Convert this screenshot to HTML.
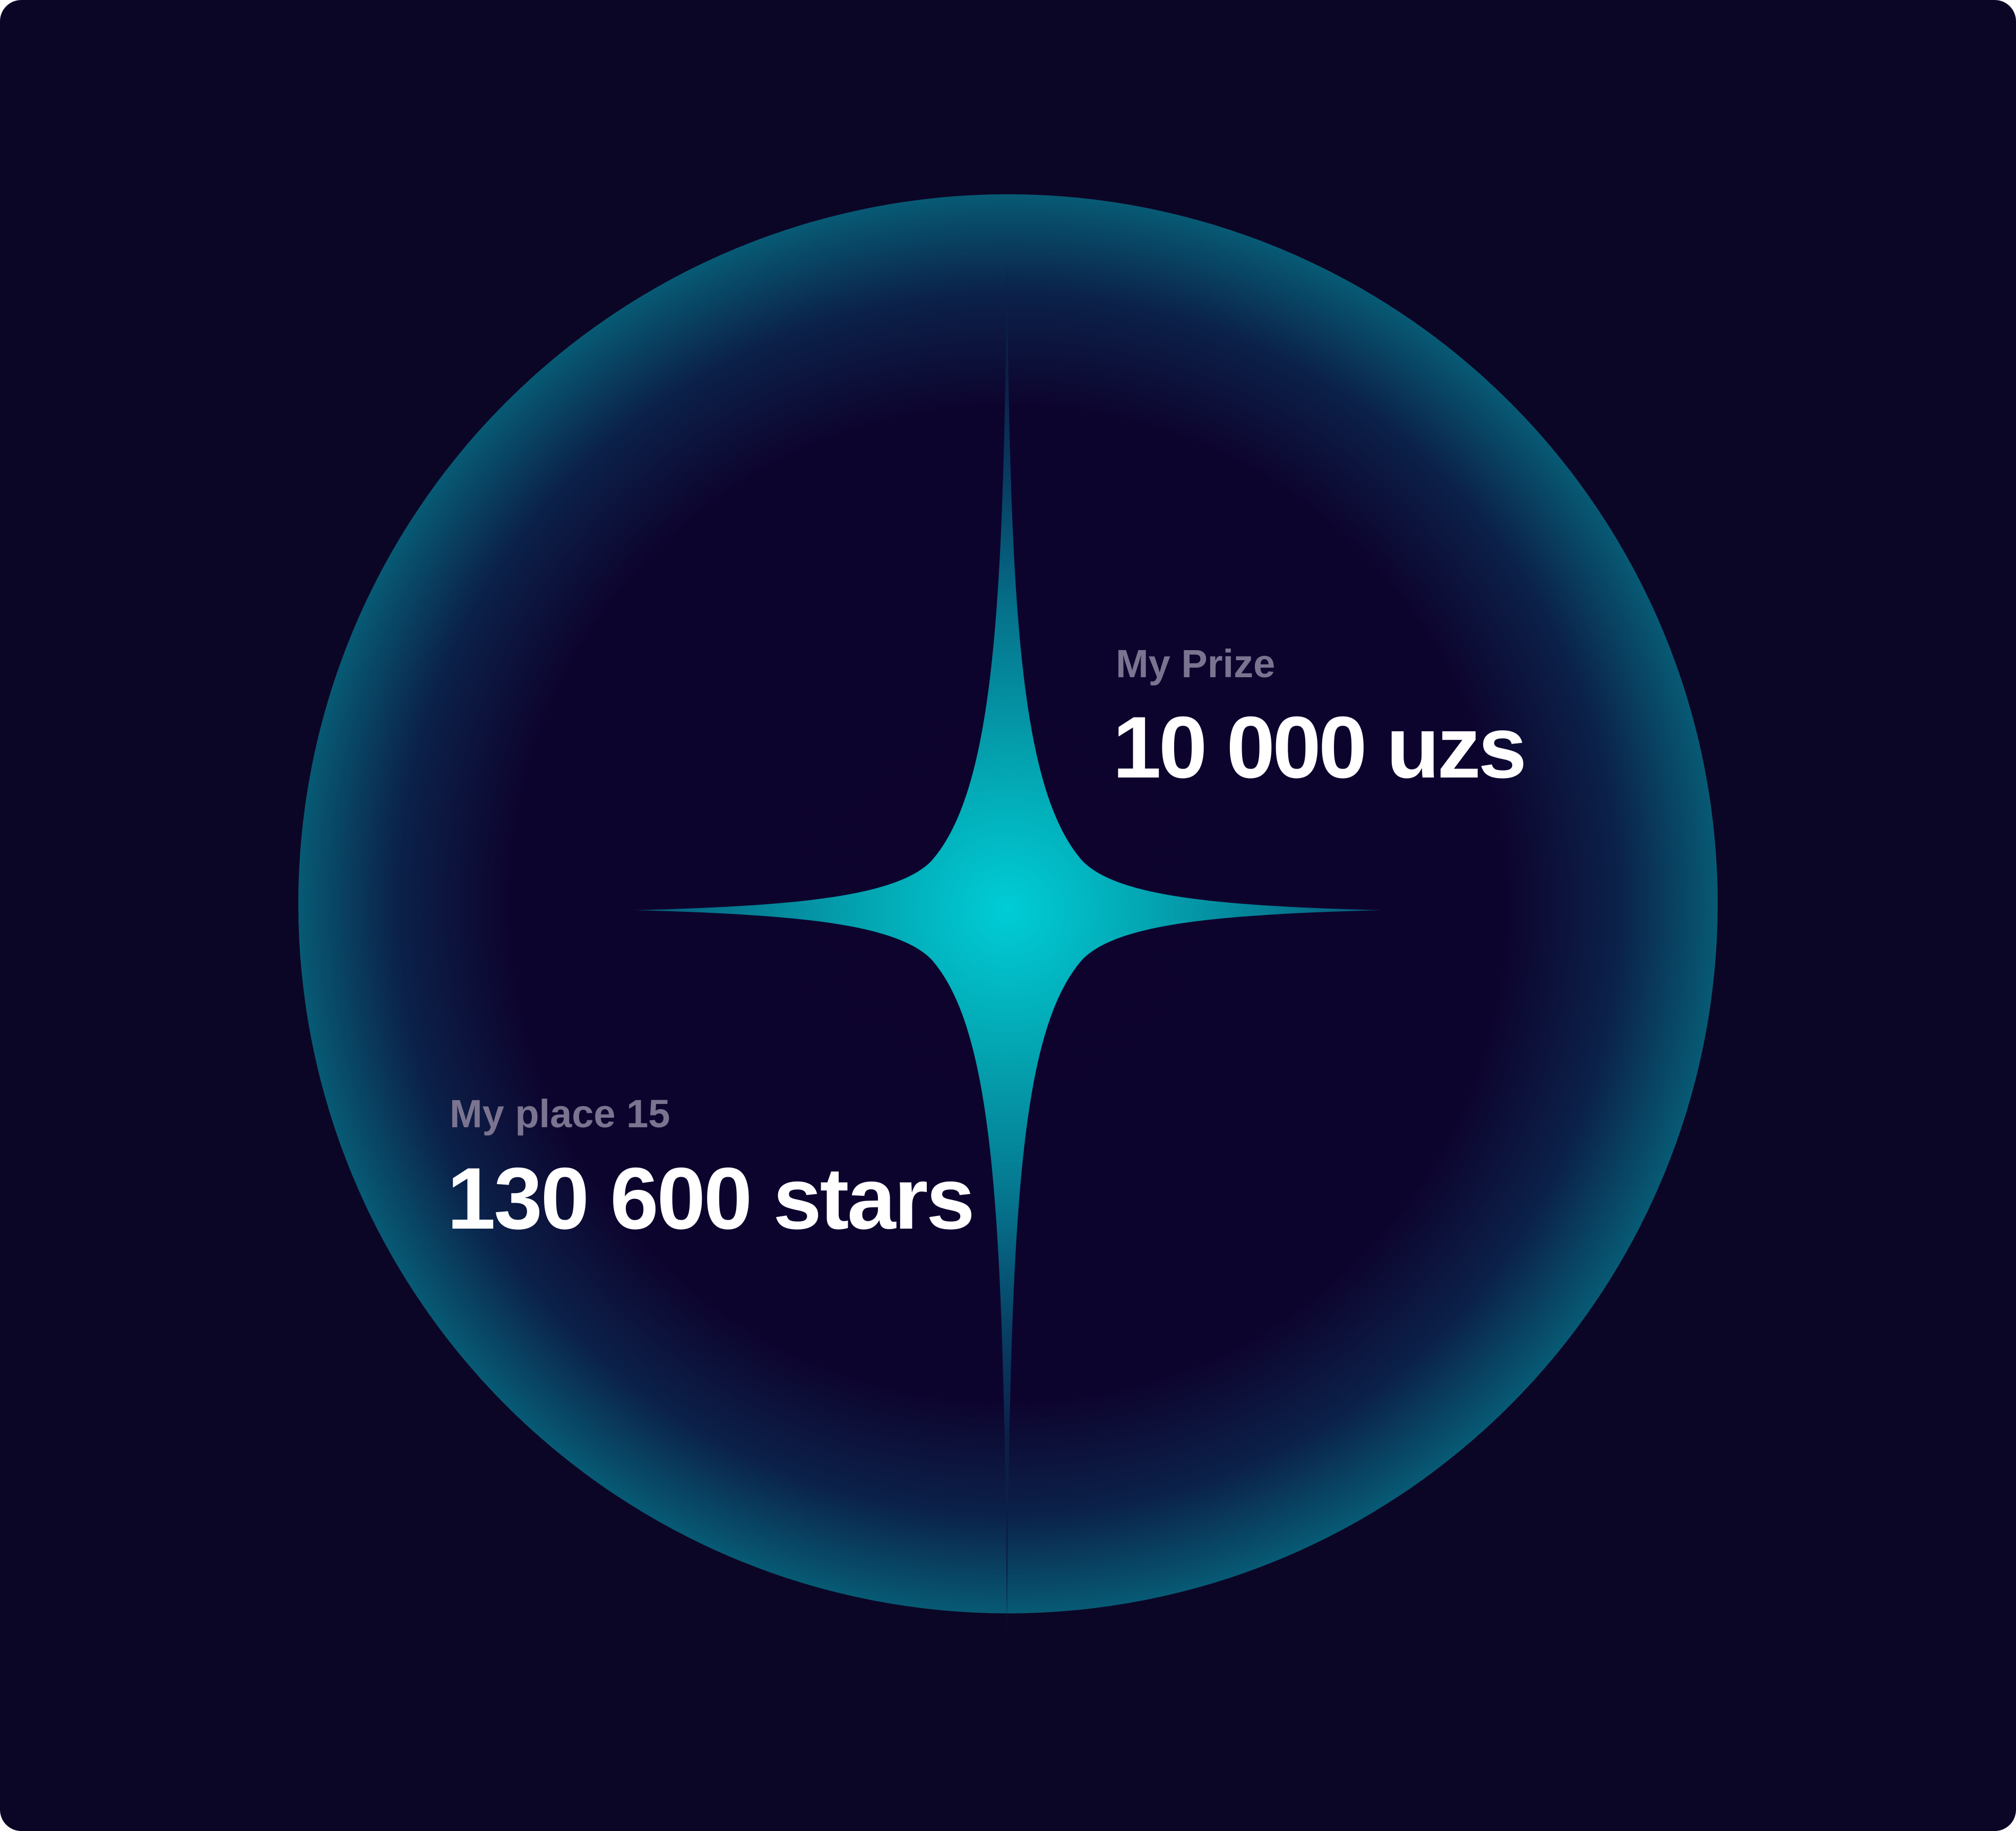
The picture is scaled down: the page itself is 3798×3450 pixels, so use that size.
<!DOCTYPE html>
<html><head><style>
html,body{margin:0;padding:0;background:#fff}
.card{position:relative;width:3798px;height:3450px;background:#0c0626;border-radius:40px;overflow:hidden;font-family:"Liberation Sans",sans-serif}
svg{position:absolute;left:0;top:0}
.t{position:absolute;white-space:nowrap;font-weight:bold}
</style></head><body>
<div class="card">
<svg width="3798" height="3450" viewBox="0 0 3798 3450">
<defs>
<radialGradient id="c" cx="1899" cy="1703" r="1337" gradientUnits="userSpaceOnUse">
<stop offset="0" stop-color="#0d032d"/>
<stop offset="0.7" stop-color="#0d042e"/>
<stop offset="0.86" stop-color="#0b2149"/>
<stop offset="1" stop-color="#075a74"/>
</radialGradient>
<radialGradient id="s" cx="0" cy="0" r="1000" gradientUnits="userSpaceOnUse">
<stop offset="0" stop-color="#00cdd6"/>
<stop offset="0.25" stop-color="#03a8b4"/>
<stop offset="0.55" stop-color="#05748d"/>
<stop offset="0.8" stop-color="#083e63"/>
<stop offset="1" stop-color="#0b1f47"/>
</radialGradient>
</defs>
<circle cx="1899" cy="1703" r="1337" fill="url(#c)"/>
<path transform="translate(1897,1715)" fill="url(#s)" d="M0,-1231 C6,-600 20,-230 143,-92 C210,-25 400,-8 705,0 C400,8 210,25 143,92 C20,230 6,600 0,1361 C-6,600 -20,230 -143,92 C-210,25 -400,8 -700,0 C-400,-8 -210,-25 -143,-92 C-20,-230 -6,-600 0,-1231 Z"/>
</svg>
<div class="t" style="left:2102px;top:1209px;font-size:74px;line-height:84px;color:#7b7490">My Prize</div>
<div class="t" style="left:2096px;top:1318px;font-size:165px;line-height:180px;color:#fff;letter-spacing:-5px">10 000 uzs</div>
<div class="t" style="left:847px;top:2057px;font-size:74px;line-height:84px;color:#7b7490">My place 15</div>
<div class="t" style="left:842px;top:2168px;font-size:165px;line-height:180px;color:#fff;letter-spacing:-3.5px">130 600 stars</div>
</div>
</body></html>
